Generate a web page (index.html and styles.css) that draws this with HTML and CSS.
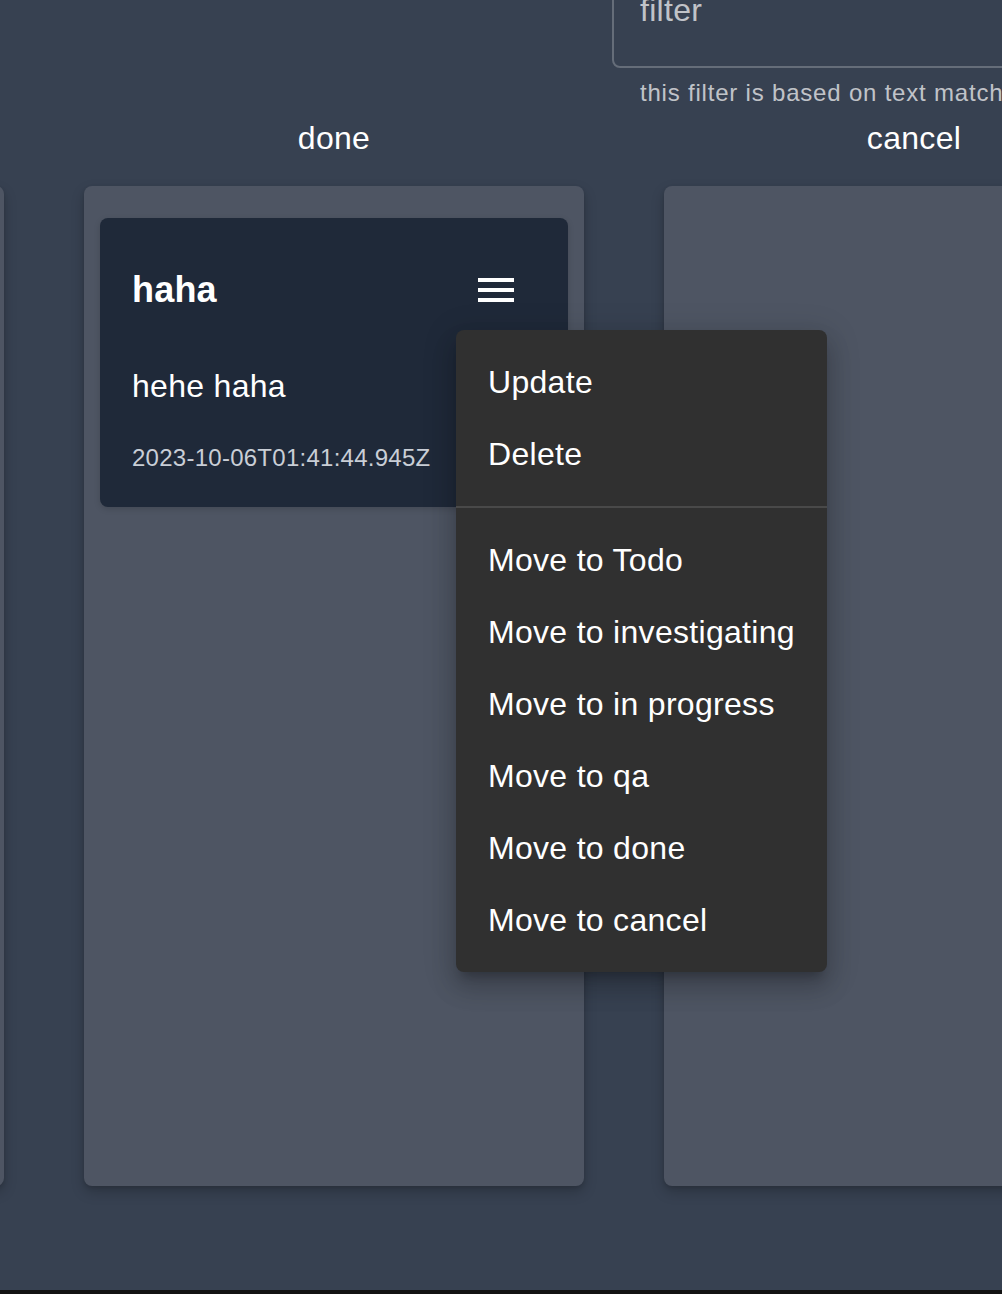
FILE: index.html
```html
<!DOCTYPE html>
<html lang="en">
<head>
<meta charset="utf-8">
<title>Board</title>
<link rel="stylesheet" href="styles.css">
</head>
<body>
<div class="page">
  <div class="filter-area">
    <div class="filter-input">
      <span class="filter-label">filter</span>
    </div>
    <p class="filter-help">this filter is based on text match</p>
  </div>

  <div class="board">
    <section class="lane">
      <div class="lane-title"></div>
      <div class="lane-body"></div>
    </section>

    <section class="lane">
      <h2 class="lane-title">done</h2>
      <div class="lane-body">
        <article class="card">
          <div class="card-head">
            <h3 class="card-title">haha</h3>
            <div class="menu-anchor">
              <button class="icon-btn" aria-label="menu">
                <svg class="menu-icon" viewBox="0 0 24 24" width="48" height="48"><path fill="#fff" d="M3 18h18v-2H3v2zm0-5h18v-2H3v2zm0-7v2h18V6H3z"/></svg>
              </button>
              <ul class="menu">
                <li class="menu-item">Update</li>
                <li class="menu-item">Delete</li>
                <li class="menu-divider"></li>
                <li class="menu-item">Move to Todo</li>
                <li class="menu-item">Move to investigating</li>
                <li class="menu-item">Move to in progress</li>
                <li class="menu-item">Move to qa</li>
                <li class="menu-item">Move to done</li>
                <li class="menu-item">Move to cancel</li>
              </ul>
            </div>
          </div>
          <p class="card-body">hehe haha</p>
          <p class="card-date">2023-10-06T01:41:44.945Z</p>
        </article>
      </div>
    </section>

    <section class="lane">
      <h2 class="lane-title">cancel</h2>
      <div class="lane-body"></div>
    </section>
  </div>
</div>
</body>
</html>
```

FILE: styles.css
```css
* { box-sizing: border-box; }

html, body {
  margin: 0;
  padding: 0;
  background: #121212;
  font-family: "Liberation Sans", Arial, Helvetica, sans-serif;
  color: #fff;
}

.page {
  height: 1290px;
  background: #374151;
  overflow: hidden;
}

.filter-area {
  margin-top: -46px;
  margin-left: 612px;
  width: 520px;
}

.filter-input {
  height: 114px;
  border: 2px solid rgba(255, 255, 255, 0.23);
  border-radius: 8px;
  padding: 0 26px;
  display: flex;
  align-items: center;
}

.filter-label {
  font-size: 32px;
  letter-spacing: 0.3px;
  color: rgba(255, 255, 255, 0.7);
  margin-top: -2px;
}

.filter-help {
  margin: 5px 0 0 28px;
  font-size: 24px;
  line-height: 40px;
  letter-spacing: 0.8px;
  color: rgba(255, 255, 255, 0.7);
  white-space: nowrap;
}

.board {
  display: flex;
  gap: 80px;
  margin-left: -496px;
}

.lane {
  flex: 0 0 500px;
  width: 500px;
}

.lane-title {
  margin: 0 0 22px;
  height: 51px;
  line-height: 50px;
  text-align: center;
  font-size: 32px;
  font-weight: 400;
  letter-spacing: 0.3px;
}

.lane-body {
  height: 1000px;
  background: #4e5563;
  border-radius: 8px;
  padding: 32px 16px 16px;
  box-shadow: 0 6px 14px rgba(0, 0, 0, 0.2), 0 2px 4px rgba(0, 0, 0, 0.12);
}

.card {
  background: #1f2939;
  border-radius: 8px;
  padding: 32px;
  box-shadow: 0 2px 6px rgba(0, 0, 0, 0.15);
}

.card-head {
  display: flex;
  align-items: center;
  justify-content: space-between;
  height: 80px;
}

.card-title {
  margin: 0;
  font-size: 36px;
  font-weight: 700;
  letter-spacing: 0.2px;
}

.menu-anchor {
  position: relative;
  width: 80px;
  height: 80px;
}

.icon-btn {
  width: 80px;
  height: 80px;
  padding: 16px;
  border: 0;
  background: transparent;
  border-radius: 50%;
  display: flex;
  align-items: center;
  justify-content: center;
}

.menu-icon { display: block; }

.menu {
  position: absolute;
  top: 100%;
  left: 0;
  z-index: 10;
  margin: 0;
  padding: 16px 0;
  list-style: none;
  background: #303030;
  border-radius: 8px;
  white-space: nowrap;
  box-shadow: 0 10px 10px -6px rgba(0, 0, 0, 0.2), 0 16px 24px 2px rgba(0, 0, 0, 0.14), 0 6px 30px 6px rgba(0, 0, 0, 0.12);
}

.menu-item {
  height: 72px;
  line-height: 72px;
  padding: 0 32px;
  font-size: 32px;
  letter-spacing: 0.3px;
  color: #fff;
}

.menu-divider {
  height: 2px;
  margin: 16px 0;
  background: rgba(255, 255, 255, 0.12);
}

.card-body {
  margin: 32px 0 0;
  font-size: 32px;
  line-height: 48px;
  letter-spacing: 0.3px;
}

.card-date {
  margin: 31px 0 0;
  font-size: 24px;
  line-height: 34px;
  letter-spacing: 0.26px;
  color: #c9ced6;
}
```
